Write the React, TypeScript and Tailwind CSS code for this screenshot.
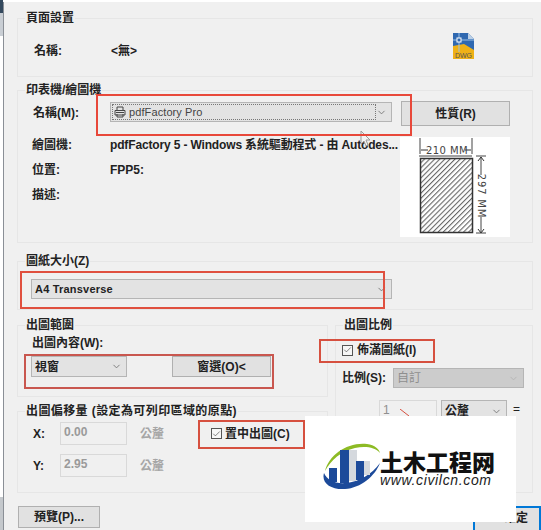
import { ChevronDown, Check } from "lucide-react";
import type { ReactNode } from "react";

const cjk = "font-['Liberation_Sans','Noto_Sans_CJK_TC',sans-serif]";

function Group({ title, className, titleClass, children }: { title: string; className: string; titleClass?: string; children?: ReactNode }) {
  return (
    <div className={`border border-[#e6e6e6] ${className}`}>
      <div className={`-mt-[10px] ml-[7px] h-[18px] w-fit bg-[#f0f0f0] px-px text-[12px] leading-[18px] font-semibold text-[#222] ${titleClass ?? ""}`}>{title}</div>
      {children}
    </div>
  );
}

function Combo({ label, className, disabled }: { label: ReactNode; className: string; disabled?: boolean }) {
  return (
    <div className={`flex items-center justify-between border border-[#b5b5b5] pl-[3px] pr-1 ${disabled ? "bg-[#cccccc] text-[#8f8f8f]" : "bg-[#e3e3e3] text-[#222]"} ${className}`}>
      <div className="min-w-0 flex-1">{label}</div>
      <ChevronDown size={11} strokeWidth={2} className={disabled ? "text-[#b5b5b5]" : "text-[#777]"} />
    </div>
  );
}

function Btn({ children, className }: { children: ReactNode; className: string }) {
  return (
    <div className={`flex items-center justify-center border border-[#b0b0b0] bg-[#e1e1e1] text-[12px] font-semibold text-[#222] ${className}`}>{children}</div>
  );
}

function CheckBox() {
  return (
    <div className="flex h-[11px] w-[11px] shrink-0 items-center justify-center border border-[#555] bg-[#f6f6f6]">
      <Check size={10} strokeWidth={1.6} className="text-[#333]" />
    </div>
  );
}

function PaperPreview() {
  return (
    <div className="h-[100px] w-[110px] shrink-0 bg-white">
      <svg width="110" height="100" viewBox="0 0 110 100">
        <defs>
          <pattern id="hatch" width="3.6" height="3.6" patternUnits="userSpaceOnUse" patternTransform="rotate(45)">
            <rect width="3.6" height="3.6" fill="#fff" />
            <rect width="1.1" height="3.6" fill="#666" />
          </pattern>
        </defs>
        <rect x="20.5" y="21.5" width="52" height="74" fill="url(#hatch)" stroke="#333" strokeWidth="1.5" />
        <path d="M19 19h53M20 1v16M72 1v16M76 19h10M76 96h10M81 20v18M81 80v15" stroke="#444" fill="none" strokeWidth="1" />
        <path d="M21 13h7M65 13h6M78 24l3-4 3 4M78 92l3 4 3-4" stroke="#333" fill="none" strokeWidth="1" />
        <text x="47" y="17" textAnchor="middle" fontSize="10" letterSpacing="0.4" fill="#444" fontFamily="DejaVu Sans">210 MM</text>
        <text transform="translate(77.5 59) rotate(90)" textAnchor="middle" fontSize="10" letterSpacing="0.8" fill="#444" fontFamily="DejaVu Sans" x="0" y="0">297 MM</text>
      </svg>
    </div>
  );
}

function DwgIcon() {
  return (
    <svg width="21" height="26" viewBox="0 0 21 26">
      <path d="M0 0h15l6 6v13H0z" fill="#2f68b0" />
      <path d="M15 0l6 6h-6z" fill="#bcd0e6" />
      <path d="M0 13l11-2 10 6v9H0z" fill="#efb116" />
      <path d="M6 0v19M0 7h21" stroke="#9cc0e6" strokeWidth="1" />
      <rect x="4" y="5" width="4" height="4" fill="#2f68b0" stroke="#fff" />
      <text x="10.5" y="24.5" textAnchor="middle" fontSize="7" fill="#555" fontFamily="Liberation Sans">DWG</text>
    </svg>
  );
}

function PrinterGlyph() {
  return (
    <svg width="12" height="12" viewBox="0 0 12 12" fill="none" stroke="#444" strokeWidth="1" className="shrink-0">
      <path d="M3 4V1h6v3M1 9V4.5h10V9H1zM3 8v3h6V8" />
      <path d="M2 6.5h8" />
    </svg>
  );
}

function Watermark() {
  return (
    <div className="absolute left-[305px] top-[416px] flex h-[106px] w-[211px] items-center bg-white pl-[18px] pb-[4px]">
      <svg width="58" height="48" viewBox="0 0 58 48" className="shrink-0">
        <path d="M2 28C6 12 24 -1 44 1c8 1 12 5 13 9C52 4 42 3 32 5 18 8 8 17 2 28z" fill="#8dbb25" />
        <path d="M1 30c-3 10 7 17 21 16 16-1 30-13 35-26-8 11-21 19-34 20C12 41 4 37 1 30z" fill="#1c4a9a" />
        <rect x="6" y="25" width="8" height="14" fill="#1c4a9a" />
        <rect x="17" y="7" width="9" height="33" fill="#1c4a9a" />
        <rect x="26" y="7" width="8" height="31" fill="#d5d9de" />
        <rect x="33" y="18" width="8" height="19" fill="#1c4a9a" />
        <rect x="41" y="18" width="6" height="14" fill="#d5d9de" />
      </svg>
      <div className="-ml-px flex flex-col pt-[2px]">
        <div className="text-[23px] leading-[24px] font-black whitespace-nowrap text-[#111] font-['Noto_Sans_CJK_SC',sans-serif]">土木工程网</div>
        <div className="text-[14px] leading-[15px] italic tracking-[0.65px] whitespace-nowrap text-[#222] font-['Liberation_Sans',sans-serif]">www.civilcn.com</div>
      </div>
    </div>
  );
}

export default function App() {
  return (
    <div className={`relative flex h-[530px] w-[541px] overflow-hidden bg-white text-[12px] text-[#222] ${cjk}`}>
      {/* sliver of the window behind the dialog */}
      <div className="flex w-[3px] shrink-0 flex-col">
        <div className="h-[13px] bg-[#34495e]" />
        <div className="h-[23px] bg-[#c9ced4]" />
        <div className="flex-1 bg-white" />
        <div className="h-[33px] bg-[#c4c8cc]" />
      </div>
      <div className="mt-[2px] flex min-w-0 flex-1 flex-col border-l border-[#8a8f96] bg-[#f0f0f0] pt-[16px] pl-[13px] pr-[8px]">
        <Group title="頁面設置" className="h-[59px] shrink-0">
          <div className="flex items-start justify-between pr-[58px] pl-[16px]">
            <div className="flex pt-[15px] font-semibold">
              <span className="w-[77px]">名稱:</span>
              <span>&lt;無&gt;</span>
            </div>
            <div className="pt-[6px]"><DwgIcon /></div>
          </div>
        </Group>

        <Group title="印表機/繪圖機" className="mt-[13px] h-[153px] shrink-0">
          <div className="mt-[2px] flex items-start pl-[15px]">
            <span className="w-[77px] pt-[3px] font-semibold">名稱(M):</span>
            <Combo
              className="mt-px h-[20px] w-[282px]"
              label={
                <div className="-ml-[2px] flex h-[16px] items-center gap-[3px] border border-dotted border-[#777] pl-[1px] text-[11px] tracking-[0.1px] text-[#444]">
                  <PrinterGlyph />
                  pdfFactory Pro
                </div>
              }
            />
            <Btn className="ml-[9px] h-[25px] w-[109px]">性質(R)</Btn>
          </div>
          <div className="mt-[11px] flex items-start pl-[14px]">
            <div className="-mt-[5px] flex w-[368px] flex-col">
              <div className="flex h-[25px] items-center font-semibold whitespace-nowrap"><span className="w-[78px] shrink-0">繪圖機:</span><span className="tracking-[-0.15px]">pdfFactory 5 - Windows 系統驅動程式 - 由 Autodes...</span></div>
              <div className="flex h-[25px] items-center font-semibold"><span className="w-[78px]">位置:</span><span>FPP5:</span></div>
              <div className="flex h-[25px] items-center font-semibold"><span>描述:</span></div>
            </div>
            <PaperPreview />
          </div>
        </Group>

        <Group title="圖紙大小(Z)" className="mt-[18px] h-[49px] shrink-0">
          <div className="mt-[9px] pl-[13px]">
            <Combo className="h-[20px] w-[361px] text-[11px] font-semibold tracking-[0.2px]" label="A4 Transverse" />
          </div>
        </Group>

        <div className="mt-[15px] flex shrink-0 gap-[7px]">
          <div className="flex w-[311px] shrink-0 flex-col">
            <Group title="出圖範圍" className="h-[72px]">
              <div className="pl-[14px] text-[12px] leading-[18px] font-semibold">出圖內容(W):</div>
              <div className="mt-[4px] flex items-start pl-[13px]">
                <Combo className="h-[21px] w-[96px] font-semibold" label="視窗" />
                <Btn className="ml-[45px] h-[21px] w-[99px]">窗選(O)&lt;</Btn>
              </div>
            </Group>
            <Group title="出圖偏移量 (設定為可列印區域的原點)" titleClass="tracking-[0.4px]" className="mt-[14px] h-[82px]">
              <div className="mt-[2px] flex flex-col gap-[9px] pl-[15px]">
                <div className="flex h-[23px] items-center">
                  <span className="w-[27px] font-semibold">X:</span>
                  <div className="h-[23px] w-[67px] border border-[#d9d9d9] pl-[3px] font-semibold text-[#9a9a9a]">0.00</div>
                  <span className="ml-[13px] font-semibold text-[#a6a6a6]">公釐</span>
                  <div className="ml-[47px] flex items-center gap-[3px] font-semibold">
                    <CheckBox />
                    置中出圖(C)
                  </div>
                </div>
                <div className="flex h-[23px] items-center">
                  <span className="w-[27px] font-semibold">Y:</span>
                  <div className="h-[23px] w-[67px] border border-[#d9d9d9] pl-[3px] font-semibold text-[#9a9a9a]">2.95</div>
                  <span className="ml-[13px] font-semibold text-[#a6a6a6]">公釐</span>
                </div>
              </div>
            </Group>
          </div>
          <Group title="出圖比例" className="h-[168px] flex-1">
            <div className="mt-[7px] flex h-[18px] items-center gap-[4px] pl-[6px] font-semibold">
              <CheckBox />
              佈滿圖紙(I)
            </div>
            <div className="mt-[9px] flex items-center pl-[6px]">
              <span className="w-[51px] font-semibold">比例(S):</span>
              <Combo className="h-[20px] w-[131px]" label="自訂" disabled />
            </div>
            <div className="mt-[12px] flex items-start pl-[43px]">
              <div className="h-[30px] w-[58px] border border-[#d9d9d9] pl-[3px] text-[#8f8f8f]">1</div>
              <Combo className="ml-[4px] h-[22px] w-[66px] font-semibold" label="公釐" />
              <span className="ml-[6px]">=</span>
            </div>
          </Group>
        </div>

        <div className="mt-[13px] flex shrink-0 justify-between pl-px pr-0">
          <Btn className="h-[22px] w-[82px]">預覽(P)...</Btn>
          <div className="-mr-[8px] flex h-[30px] w-[68px] justify-center border-2 border-[#0078d7] bg-[#e1e1e1] pl-[18px] pt-[1px] text-[12px] font-semibold">確定</div>
        </div>
      </div>

      {/* mouse pointer left in the capture */}
      <svg width="12" height="18" viewBox="0 0 12 18" className="absolute left-[360px] top-[130px]">
        <path d="M1 1v13l3-3 2 5 2-1-2-5h4z" fill="#f4f4f4" stroke="#9a9a9a" strokeWidth="1" />
      </svg>

      {/* red annotation boxes */}
      <div className="absolute left-[96px] top-[94px] h-[42px] w-[316px] border-2 border-[#e8483a]" />
      <div className="absolute left-[20px] top-[271px] h-[38px] w-[365px] border-2 border-[#e0503f]" />
      <div className="absolute left-[24px] top-[354px] h-[35px] w-[250px] border-2 border-[#c9574f]" />
      <div className="absolute left-[198px] top-[420px] h-[29px] w-[107px] border-2 border-[#d6503f]" />
      <div className="absolute left-[319px] top-[339px] h-[24px] w-[116px] border-2 border-[#d6503f]" />
      <svg width="12" height="8" className="absolute left-[400px] top-[409px]"><path d="M0 0l9 7" stroke="#d6503f" /></svg>

      <Watermark />
    </div>
  );
}
